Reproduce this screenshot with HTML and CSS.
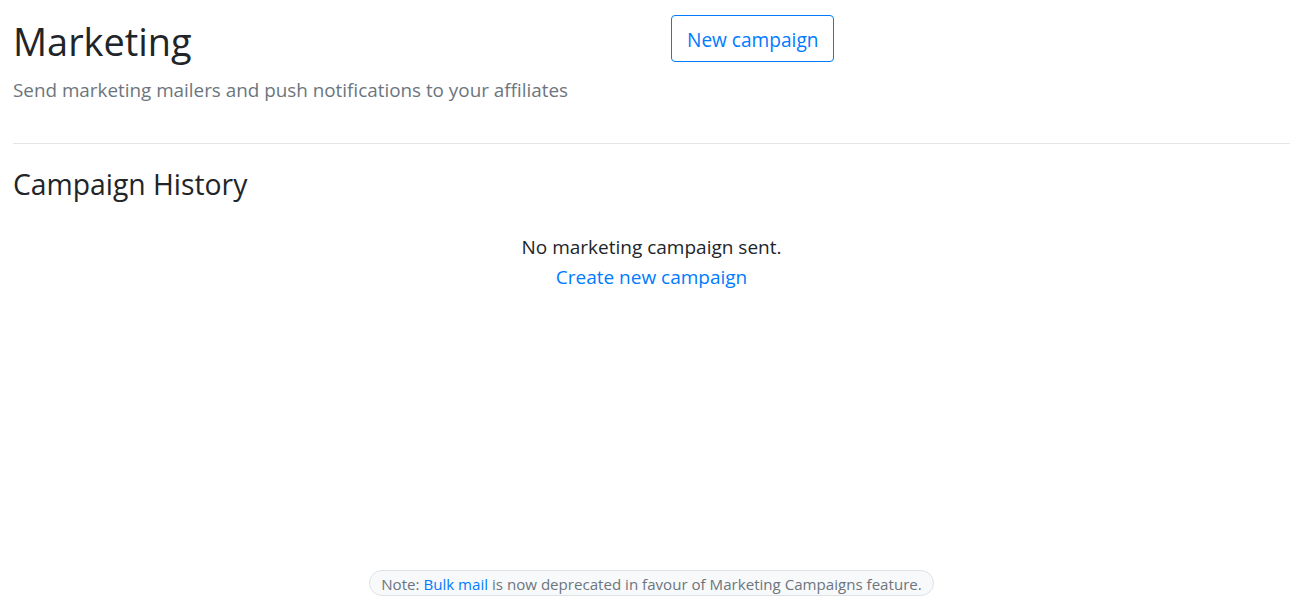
FILE: index.html
```html
<!DOCTYPE html>
<html lang="en">
<head>
<meta charset="utf-8">
<title>Marketing</title>
<link rel="stylesheet" href="styles.css">
</head>
<body>
<div class="page">
  <header class="header">
    <div class="header-text">
      <h1 class="title">Marketing</h1>
      <p class="lead">Send marketing mailers and push notifications to your affiliates</p>
    </div>
    <div class="header-actions">
      <a class="btn-outline" href="#">New campaign</a>
    </div>
  </header>
  <hr class="divider">
  <section class="history">
    <h3 class="section-title">Campaign History</h3>
    <div class="empty">
      <p class="empty-text">No marketing campaign sent.</p>
      <a class="link" href="#">Create new campaign</a>
    </div>
  </section>
  <footer class="footer">
    <span class="note">Note: <a class="link" href="#">Bulk mail</a> is now deprecated in favour of Marketing Campaigns feature.</span>
  </footer>
</div>
</body>
</html>
```

FILE: styles.css
```css
html, body {
  margin: 0;
  padding: 0;
}
body {
  font-family: "Open Sans", "Noto Sans", sans-serif;
  color: #212529;
  background: #fff;
}
.page {
  min-height: 100vh;
  box-sizing: border-box;
  padding: 0 16px 6px 13px;
  display: flex;
  flex-direction: column;
}
.header {
  display: grid;
  grid-template-columns: 658px 1fr;
}
.title {
  margin: 17px 0 10px;
  font-size: 37.9px;
  font-weight: 400;
  line-height: 48px;
}
.lead {
  margin: 0;
  font-size: 18.85px;
  line-height: 30px;
  color: #6c757d;
}
.header-actions {
  padding-top: 15px;
}
.btn-outline {
  display: inline-block;
  box-sizing: border-box;
  height: 47px;
  padding: 3px 15px 0;
  border: 1px solid #007bff;
  border-radius: 4px;
  color: #007bff;
  font-size: 19.1px;
  line-height: 42px;
  text-decoration: none;
}
.divider {
  margin: 38px 0 0;
  border: 0;
  border-top: 1px solid #e5e5e5;
}
.section-title {
  margin: 22px 0 0;
  font-size: 28.3px;
  font-weight: 400;
  line-height: 36px;
}
.empty {
  margin-top: 30px;
  text-align: center;
  font-size: 19px;
  line-height: 30px;
}
.empty-text {
  margin: 0;
}
.link {
  color: #007bff;
  text-decoration: none;
}
.footer {
  margin-top: auto;
  display: flex;
  justify-content: center;
}
.note {
  display: inline-block;
  box-sizing: border-box;
  height: 26px;
  padding: 2px 11px 0;
  border: 1px solid #dee2e6;
  border-radius: 13px;
  background: #f8f9fa;
  color: #6c757d;
  font-size: 15.1px;
  line-height: 22px;
}
```
